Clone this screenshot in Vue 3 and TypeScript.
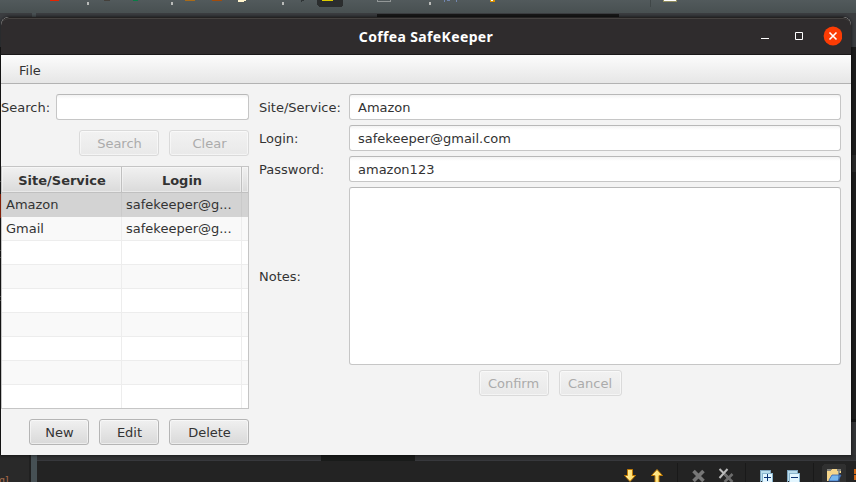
<script setup lang="ts">
import { ref } from 'vue'

interface Entry {
  site: string
  login: string
  password: string
}

const entries: Entry[] = [
  { site: 'Amazon', login: 'safekeeper@gmail.com', password: 'amazon123' },
  { site: 'Gmail', login: 'safekeeper@gmail.com', password: '' },
]
const rowCount = 9
const selected = ref(0)
const dots: number[] = [87, 171, 282, 429]
</script>

<template>
  <div class="desktop">
    <svg class="backdrop" width="856" height="482" viewBox="0 0 856 482" shape-rendering="crispEdges">
      <defs>
        <linearGradient id="bar" x1="0" y1="0" x2="0" y2="1">
          <stop offset="0" stop-color="#525a5c" />
          <stop offset="1" stop-color="#485051" />
        </linearGradient>
        <linearGradient id="gold" x1="0" y1="0" x2="1" y2="0">
          <stop offset="0" stop-color="#fff3a8" />
          <stop offset="1" stop-color="#ffd65a" />
        </linearGradient>
      </defs>
      <rect width="856" height="482" fill="#1c1c1c" />
      <rect width="856" height="13" fill="url(#bar)" />
      <rect y="13" width="856" height="34" fill="#3b3d40" />
      <rect x="377" y="14" width="242" height="4" fill="#181818" />
      <rect x="32" y="13" width="4" height="4" fill="#4a5255" />
      <!-- toolbar icon bottoms -->
      <rect x="50" y="0" width="9" height="1" fill="#e52300" />
      <rect x="104" y="0" width="6" height="1" fill="#44403b" />
      <rect x="133" y="0" width="5" height="1" fill="#087c46" />
      <rect x="185" y="0" width="10" height="1" fill="#a96b18" />
      <rect x="212" y="0" width="10" height="1" fill="#a24b0b" />
      <path d="M238 0h8v1h-2v1h-6z" fill="#fff4cc" />
      <rect v-for="x in dots" :key="x" :x="x" y="2" width="2" height="3" fill="#b9bbb9" />
      <path d="M301 0h3v1h-2v1h-1z" fill="#303537" />
      <path d="M317 0h26v5l-2 2h-22l-2-2z" fill="#2b2d2e" />
      <path d="M322 0h11v1h-11z" fill="#ddcc00" />
      <path d="M377.500 0v1.500h13v-1.500" fill="none" stroke="#929797" />
      <path d="M444 0h1v2h-1zM447 0h3v1h-3zM456 0h1v2h-1z" fill="#7185ad" />
      <path d="M490 0h5v2h-5z" fill="#d89000" />
      <path d="M491 0h2v1h-2z" fill="#fff" />
      <rect x="650" y="0" width="1" height="7" fill="#404748" />
      <rect x="663" y="0" width="14" height="2" fill="#918d5e" />
      <rect x="664" y="0" width="12" height="1" fill="#fff" />
      <!-- editor edges -->
      <rect x="0" y="194" width="1" height="24" fill="#b82d0c" />
      <path d="M0 181h1v1H0zM0 250h1v1H0zM0 257h1v1H0zM0 296h1v1H0zM0 300h1v1H0z" fill="#666" />
      <rect x="852" y="155" width="4" height="17" fill="#292929" />
      <rect x="851" y="419" width="5" height="3" fill="#131414" />
      <rect x="851" y="422" width="5" height="39" fill="#333436" />
      <!-- bottom panels -->
      <rect x="0" y="455" width="29" height="27" fill="#292929" />
      <rect x="29" y="455" width="2" height="27" fill="#202020" />
      <rect x="31" y="455" width="6" height="27" fill="#465054" />
      <rect x="37" y="455" width="819" height="6" fill="#2f3032" />
      <rect x="37" y="460" width="819" height="1" fill="#37383c" />
      <rect x="321" y="455" width="94" height="6" fill="#191b1a" />
      <rect x="37" y="461" width="819" height="21" fill="#232323" />
      <path d="M677 463h1v19h-1zM745 463h1v19h-1zM813 463h1v19h-1z" fill="#191919" />
      <g shape-rendering="geometricPrecision">
        <path d="M627.500 469.500h5v6h3l-5.500 6-5.500-6h3z" fill="url(#gold)" stroke="#c07a05" />
        <path d="M657 469.500l5.500 6h-3.500v8h-4v-8h-3.500z" fill="url(#gold)" stroke="#c07a05" />
        <path d="M693.500 471l10 10m0-10l-10 10" stroke="#777" stroke-width="3.600" />
        <path d="M719.500 469l8 8m0-8l-8 9" stroke="#bbb" stroke-width="2" />
        <path d="M724.500 474l8 8m0-8l-8 8" stroke="#6c6c6c" stroke-width="2.600" />
      </g>
      <path d="M760.500 482v-11.500h10v3" fill="#b9dcec" stroke="#7fa4be" />
      <path d="M762.500 483v-9.500h10v9.500" fill="#e3f6ff" stroke="#8ab5ce" />
      <path d="M764 477h7v1h-7zM767 474h1v7h-1z" fill="#0d3474" />
      <path d="M787.500 482v-11.500h10v3" fill="#b9dcec" stroke="#7fa4be" />
      <path d="M789.500 483v-9.500h10v9.500" fill="#e3f6ff" stroke="#8ab5ce" />
      <path d="M791 477h7v1h-7z" fill="#0d3474" />
      <path d="M824 464h20l2 2v16h-24v-16z" fill="#303030" />
      <g shape-rendering="geometricPrecision">
        <path d="M827 470h4l1-1h5l1 1h3v3h-2v5l-9 3h-3z" fill="#f4d58b" />
        <path d="M827 469h4v2h-4zM837 469h4v2h-4z" fill="#80807b" />
        <path d="M829 480l3-5h9l-3 6h-9z" fill="#76b6ee" stroke="#3560ad" stroke-width=".8" />
        <path d="M839 471v11" stroke="#315a91" />
      </g>
      <rect x="854" y="469" width="2" height="5" fill="#cf6618" />
      <rect x="854" y="475" width="2" height="5" fill="#cf6618" />
    </svg>
    <span class="console">g]</span>

    <main class="window">
      <header class="titlebar">
        <span class="edge"></span>
        <h1>Coffea SafeKeeper</h1>
        <div class="controls">
          <svg width="86" height="20" viewBox="0 0 86 20">
            <path d="M5 12.500h8" stroke="#fff" />
            <path d="M39.500 6.500h7v7h-7z" fill="none" stroke="#fff" />
            <circle cx="77" cy="10" r="9.400" fill="#fc3c04" />
            <path d="M73.500 6.500l7 7m0-7l-7 7" stroke="#fff" stroke-width="1.600" />
          </svg>
        </div>
      </header>
      <nav class="menubar"><span>File</span></nav>
      <div class="content">
        <section class="left">
          <div class="search-row">
            <span>Search:</span>
            <div class="field"></div>
          </div>
          <div class="buttons">
            <button class="w80" disabled>Search</button>
            <button class="w80" disabled>Clear</button>
          </div>
          <div class="table">
            <div class="row head">
              <span>Site/Service</span><span>Login</span><span></span>
            </div>
            <div
              v-for="i in rowCount"
              :key="i"
              class="row"
              :class="{ selected: i - 1 === selected }"
            >
              <span>{{ entries[i - 1]?.site }}</span>
              <span>{{ entries[i - 1] ? entries[i - 1].login.slice(0, 12) + '...' : '' }}</span>
              <span></span>
            </div>
          </div>
          <div class="buttons">
            <button class="w60">New</button>
            <button class="w60">Edit</button>
            <button class="w80">Delete</button>
          </div>
        </section>
        <section class="right">
          <div class="form">
            <span>Site/Service:</span>
            <div class="field">{{ entries[selected].site }}</div>
            <span>Login:</span>
            <div class="field">{{ entries[selected].login }}</div>
            <span>Password:</span>
            <div class="field">{{ entries[selected].password }}</div>
            <span>Notes:</span>
            <div class="field notes"></div>
          </div>
          <div class="buttons actions">
            <button class="w70" disabled>Confirm</button>
            <button class="w63" disabled>Cancel</button>
          </div>
        </section>
      </div>
    </main>
  </div>
</template>

<style>
html,
body {
  margin: 0;
  overflow: hidden;
}
</style>

<style scoped>
.desktop {
  position: relative;
  width: 856px;
  height: 482px;
  overflow: hidden;
  font: 13px/16px 'DejaVu Sans', sans-serif;
  color: #333;
}
.backdrop {
  position: absolute;
  left: 0;
  top: 0;
}
.console {
  position: absolute;
  left: -1px;
  top: 473px;
  font: 10px/15px 'DejaVu Sans Mono', monospace;
  letter-spacing: -1px;
  color: #a5694a;
}
.window {
  position: absolute;
  left: 1px;
  top: 17px;
  width: 850px;
  height: 438px;
  background: #f3f3f3;
  border-radius: 8px 8px 0 0;
  overflow: hidden;
  box-shadow: 0 0 3px 1px rgba(0, 0, 0, 0.45);
}
.titlebar {
  box-sizing: border-box;
  display: grid;
  grid-template-columns: 1fr auto 1fr;
  align-items: center;
  height: 38px;
  background: #2f2c2d;
  border-top: 1px solid #242222;
  border-bottom: 1px solid #1b191a;
  border-radius: 8px 8px 0 0;
  box-shadow: inset 0 1px #454240;
}
h1 {
  margin: 0;
  padding-top: 2px;
  font: bold 14px/20px 'Noto Sans', sans-serif;
  letter-spacing: 0.36px;
  color: #fff;
}
.controls {
  display: flex;
  justify-content: flex-end;
  padding-right: 9px;
}
.menubar {
  box-sizing: border-box;
  height: 29px;
  padding: 8px 18px 0;
  background: linear-gradient(#fcfcfc, #e6e6e6);
  border-bottom: 1px solid #b2b2b2;
}
.content {
  display: flex;
  gap: 10px;
  padding: 10px 10px 10px 0;
}
.left {
  display: flex;
  flex-direction: column;
  gap: 10px;
  width: 248px;
}
.search-row {
  display: flex;
  align-items: center;
  justify-content: space-between;
}
.search-row span,
.form span {
  padding-top: 2px;
}
.search-row .field {
  width: 193px;
}
.field {
  box-sizing: border-box;
  height: 26px;
  padding: 5px 8px 3px;
  background: linear-gradient(#f3f3f3, #fff 4px);
  border: 1px solid #c6c6c6;
  border-top-color: #b8b8b8;
  border-radius: 3px;
}
.buttons {
  display: flex;
  justify-content: flex-end;
  gap: 10px;
}
button {
  box-sizing: border-box;
  height: 26px;
  padding: 2px 0 0 1px;
  font: inherit;
  color: #333;
  background: linear-gradient(#f0f0f0, #d9d9d9);
  border: 1px solid #b5b5b5;
  border-radius: 3px;
  box-shadow: inset 0 0 0 1px rgba(255, 255, 255, 0.5);
}
button:disabled {
  color: #ababab;
  background: linear-gradient(#f2f2f2, #e9e9e9);
  border-color: #dadada;
}
.w60 { width: 60px; }
.w63 { width: 63px; }
.w70 { width: 70px; }
.w80 { width: 80px; }
.actions button {
  padding-left: 0;
  padding-right: 1px;
}
.table {
  box-sizing: border-box;
  height: 243px;
  border: 1px solid #c5c5c5;
  overflow: hidden;
  background: #fff;
}
.row {
  display: grid;
  grid-template-columns: 120px 120px 6px;
  height: 24px;
}
.row span {
  box-sizing: border-box;
  padding: 4px 4px 3px;
  border-right: 1px solid #ededed;
  border-bottom: 1px solid #ededed;
  white-space: nowrap;
}
.row span:last-child {
  border-right: 0;
  padding: 0;
}
.row:nth-child(odd) {
  background: #f9f9f9;
}
.row.selected {
  background: #d3d3d3;
}
.row.selected span {
  border-right-color: #cacaca;
  border-bottom-color: #d3d3d3;
}
.row.head {
  height: 26px;
  background: linear-gradient(#f1f1f1, #d9d9d9);
  font-weight: bold;
  text-align: center;
}
.row.head span {
  padding: 6px 0 0 1px;
  border-color: #c0c0c0;
  box-shadow: inset 0 0 0 1px rgba(255, 255, 255, 0.4);
}
.right {
  display: flex;
  flex-direction: column;
  gap: 5px;
  flex: 1;
}
.form {
  display: grid;
  grid-template-columns: 90px 1fr;
  row-gap: 5px;
  align-items: center;
}
.notes {
  height: 178px;
  background: #fff;
}
.actions {
  justify-content: flex-start;
  padding-left: 220px;
}
</style>
